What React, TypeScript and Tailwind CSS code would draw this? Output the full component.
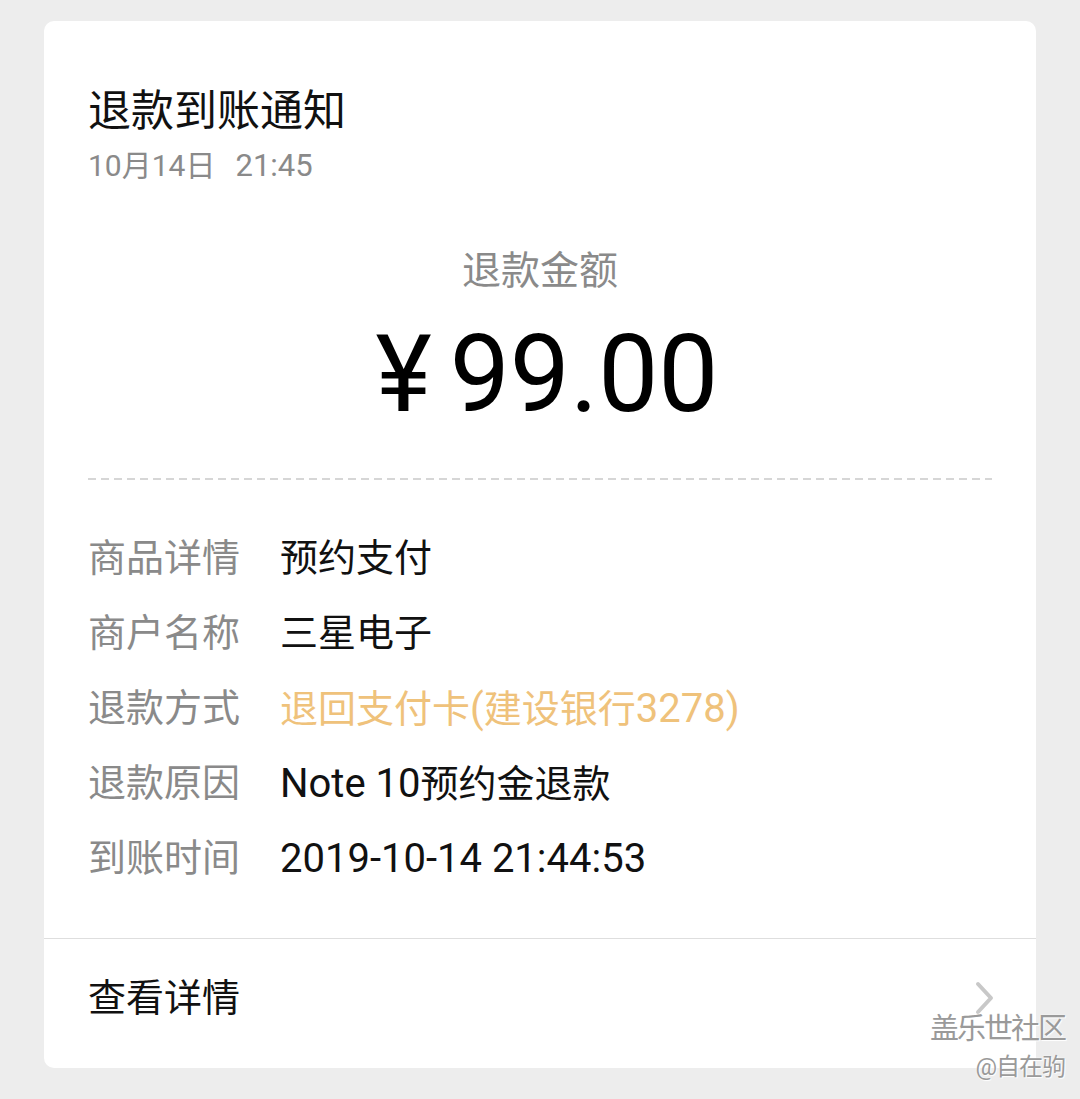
import React from 'react';

const cjk = { fontFamily: 'Roboto, "Noto Sans CJK SC", sans-serif' };

type Part = string | { latin: string };

const rows: { label: string; value: Part[]; accent?: boolean }[] = [
  { label: '商品详情', value: ['预约支付'] },
  { label: '商户名称', value: ['三星电子'] },
  { label: '退款方式', value: ['退回支付卡', { latin: '(' }, '建设银行', { latin: '3278)' }], accent: true },
  { label: '退款原因', value: [{ latin: 'Note 10' }, '预约金退款'] },
  { label: '到账时间', value: [{ latin: '2019-10-14 21:44:53' }] },
];

const App: React.FC = () => {
  return (
    <div className="relative w-[1080px] h-[1099px] bg-[#ededed] pt-[21px] px-[44px] overflow-hidden" style={cjk}>
      <div className="bg-white rounded-[10px] w-[992px]">
        <div className="px-[44px] pt-[65px]">
          <h1 className="text-[43px] leading-[50px] text-[#111]">退款到账通知</h1>
          <p className="mt-[12px] text-[30px] leading-[36px] text-[#8a8a8a]">
            10月14日<span className="ml-[20px] text-[31px]">21:45</span>
          </p>

          <p className="mt-[64px] text-center text-[39px] leading-[46px] text-[#8a8a8a]">退款金额</p>
          <div className="mt-[28px] flex justify-center items-center text-[107px] leading-[106px] text-black">
            <span className="ml-[14px] mr-[18px]">¥</span>
            <span>99.00</span>
          </div>

          <div className="mt-[50px] h-[2px] bg-[repeating-linear-gradient(90deg,#d6d6d6_0px,#d6d6d6_8px,transparent_8px,transparent_13px)]" />

          <div className="mt-[41px]">
            {rows.map((r) => (
              <div key={r.label} className="flex h-[75px] items-center text-[38px]">
                <span className="w-[192px] text-[#8a8a8a]">{r.label}</span>
                <span className={r.accent ? 'text-[#efc27b]' : 'text-[#111]'}>
                  {r.value.map((p, i) =>
                    typeof p === 'string' ? (
                      <span key={i}>{p}</span>
                    ) : (
                      <span key={i} className="text-[40px]">{p.latin}</span>
                    )
                  )}
                </span>
              </div>
            ))}
          </div>
        </div>

        <div className="mt-[42px] border-t border-[#dedede]" />
        <div className="flex items-center justify-between pl-[44px] pr-[40px] pt-[34px] pb-[45px]">
          <span className="text-[38px] leading-[50px] text-[#111]">查看详情</span>
          <svg width="22" height="34" viewBox="0 0 22 34" fill="none">
            <path d="M4 3 L17 17 L4 31" stroke="#c8c8c8" strokeWidth="4" strokeLinecap="round" strokeLinejoin="round" />
          </svg>
        </div>
      </div>

      <div className="absolute right-[15px] top-[1010px] flex flex-col items-end text-[#9a9a9a]" style={{ textShadow: '0 0 2px #fff, 1px 1px 1px #fff' }}>
        <span className="text-[29px] leading-[38px] tracking-[-2px]">盖乐世社区</span>
        <span className="text-[24px] leading-[30px] mt-[4px] tracking-[-1px]">@自在驹</span>
      </div>
    </div>
  );
};

export default App;
